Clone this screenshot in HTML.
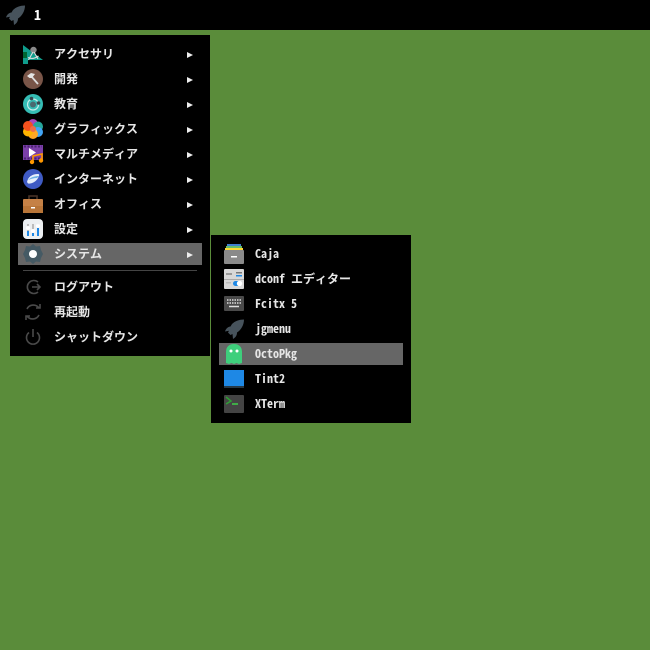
<!DOCTYPE html>
<html><head><meta charset="utf-8"><style>
html,body{margin:0;padding:0;width:650px;height:650px;overflow:hidden;background:#5a8c3a}
*{box-sizing:border-box}
.a{position:absolute}
.t{position:absolute;white-space:pre;color:#e6e6e6;font:bold 12px/20px "Noto Sans Mono CJK JP","DejaVu Sans Mono","Noto Sans CJK JP",monospace;}
.r{position:absolute;left:187px;width:0;height:0;border-left:6px solid #eee;border-top:3px solid transparent;border-bottom:3px solid transparent}
svg{position:absolute;overflow:visible}
</style></head><body>
<div class="a" style="left:0;top:0;width:650px;height:30px;background:#000"></div>
<svg style="left:5px;top:5px" width="20" height="20" viewBox="0 0 20 20"><path d="M20 .5C15.500 .5 11 2 8 5L6.500 7.500C4 7.800 2 9.500 1 12.500L5 11.800 4 13.500 6.500 16 8.500 15 9 20C11.500 18.500 13 16.500 13 13.500 17 11 20 6 20 .5Z" fill="#47535c"/></svg>
<div class="t" style="left:34px;top:5px;font-size:14px;color:#fff">1</div>

<div class="a" style="left:10px;top:35px;width:200px;height:321px;background:#000"></div>
<div class="a" style="left:18px;top:243px;width:184px;height:22px;background:#666"></div>
<div class="a" style="left:23px;top:270px;width:174px;height:1px;background:#444"></div>
<div class="a" style="left:211px;top:235px;width:200px;height:188px;background:#000"></div>
<div class="a" style="left:219px;top:343px;width:184px;height:22px;background:#666"></div>

<!-- main icons -->
<svg style="left:23px;top:44px" width="20" height="20" viewBox="0 0 20 20"><path d="M0 1 20 16H5V20H0Z" fill="#0f9d8c"/><rect x="0" y="8" width="4" height="6" fill="#063"/><circle cx="10.500" cy="6" r="3.200" fill="#8a8a8a"/><path d="M10 8 5.500 16M11 8 15 15M5 13.500Q10 16 15.500 12" stroke="#ddd" stroke-width="1.100" fill="none"/></svg>
<svg style="left:23px;top:69px" width="20" height="20" viewBox="0 0 20 20"><circle cx="10" cy="10" r="10" fill="#795548"/><path d="M8 7 15 15" stroke="#ddd" stroke-width="1.800"/><path d="M4 7 8 4 12 5 9 9 6.500 9Z" fill="#e4e4e4"/></svg>
<svg style="left:23px;top:94px" width="20" height="20" viewBox="0 0 20 20"><circle cx="10" cy="10" r="10" fill="#35bdb5"/><circle cx="10" cy="10.500" r="5.500" fill="none" stroke="#c5ecea" stroke-width="1.200"/><circle cx="10" cy="10.500" r="3" fill="#4a6a70"/><circle cx="8.500" cy="4.500" r="1.800" fill="#37474f"/><circle cx="15.500" cy="9" r="1.800" fill="#37474f"/></svg>
<svg style="left:23px;top:119px" width="20" height="20" viewBox="0 0 20 20"><circle cx="10" cy="5" r="5" fill="#ab47bc"/><circle cx="15" cy="7.500" r="5" fill="#26a69a"/><circle cx="15" cy="13" r="5" fill="#42a5f5"/><circle cx="10" cy="15" r="5" fill="#ffa726"/><circle cx="5" cy="12.500" r="5" fill="#ffb300"/><circle cx="5" cy="7" r="5" fill="#f4511e"/><circle cx="10" cy="10" r="3" fill="#ef6c4a"/></svg>
<svg style="left:23px;top:144px" width="20" height="20" viewBox="0 0 20 20"><rect y="1" width="20" height="15" fill="#7b3fa8"/><path d="M1 2.500H19M1 14.500H19" stroke="#4a2370" stroke-width="2" stroke-dasharray="2 1.500"/><path d="M6 4 13 8.500 6 13Z" fill="#fff"/><path d="M10 18V12L19 10V16.500" fill="none" stroke="#ff9800" stroke-width="1.600"/><circle cx="9" cy="18" r="2.200" fill="#ff9800"/><circle cx="18" cy="16.500" r="2.200" fill="#ff9800"/></svg>
<svg style="left:23px;top:169px" width="20" height="20" viewBox="0 0 20 20"><circle cx="10" cy="10" r="10" fill="#3f5bc4"/><path d="M4 13C5 8 9 5 15 5 17 5 16 7 15 9 13 13 8 15 5 14.500Z" fill="#e8f0fb"/><path d="M5 11C8 8 12 7 16 7L14 9C11 9 8 10 5 11Z" fill="#6fb2e5"/></svg>
<svg style="left:23px;top:194px" width="20" height="20" viewBox="0 0 20 20"><rect y="5" width="20" height="14" rx="1" fill="#c58146"/><rect y="12" width="20" height="7" fill="#b87538"/><path d="M6 5V2H14V5" fill="none" stroke="#4a3428" stroke-width="1.600"/><rect x="8" y="13" width="4" height="1.500" fill="#fff"/></svg>
<svg style="left:23px;top:219px" width="20" height="20" viewBox="0 0 20 20"><rect width="20" height="20" rx="4" fill="#eceff1"/><path d="M5 5V17M10 5V17M15 5V17" stroke="#bbb" stroke-width="2"/><path d="M5 12V17M10 14V17M15 9V17" stroke="#1e88e5" stroke-width="2"/><circle cx="5" cy="9" r="2" fill="#fff"/><circle cx="10" cy="12" r="2" fill="#fff"/><circle cx="15" cy="7" r="2" fill="#fff"/></svg>
<svg style="left:23px;top:244px" width="20" height="20" viewBox="0 0 20 20"><path d="M10 0 13 2.500 17 2 18 6 20 10 18 14 17 18 13 17.500 10 20 7 17.500 3 18 2 14 0 10 2 6 3 2 7 2.500Z" fill="#455a64"/><circle cx="10" cy="10" r="4" fill="#fff"/></svg>
<svg style="left:23px;top:277px" width="20" height="20" viewBox="0 0 20 20" fill="none" stroke="#4a4a4a" stroke-width="1.600"><path d="M15 5A6.500 6.500 0 1 0 15 15"/><path d="M9 10H17M14 7 17 10 14 13"/></svg>
<svg style="left:23px;top:302px" width="20" height="20" viewBox="0 0 20 20" fill="none" stroke="#4a4a4a" stroke-width="1.600"><path d="M4 7A7 7 0 0 1 16 6M16 13A7 7 0 0 1 4 14"/><path d="M13 6H17V2M7 14H3V18"/></svg>
<svg style="left:23px;top:327px" width="20" height="20" viewBox="0 0 20 20" fill="none" stroke="#4a4a4a" stroke-width="1.600"><path d="M6 5.500A6.500 6.500 0 1 0 14 5.500M10 2V10"/></svg>

<div class="t" style="left:54px;top:44px">アクセサリ</div>
<div class="t" style="left:54px;top:69px">開発</div>
<div class="t" style="left:54px;top:94px">教育</div>
<div class="t" style="left:54px;top:119px">グラフィックス</div>
<div class="t" style="left:54px;top:144px">マルチメディア</div>
<div class="t" style="left:54px;top:169px">インターネット</div>
<div class="t" style="left:54px;top:194px">オフィス</div>
<div class="t" style="left:54px;top:219px">設定</div>
<div class="t" style="left:54px;top:244px">システム</div>
<div class="t" style="left:54px;top:277px">ログアウト</div>
<div class="t" style="left:54px;top:302px">再起動</div>
<div class="t" style="left:54px;top:327px">シャットダウン</div>
<div class="r" style="top:52px"></div><div class="r" style="top:77px"></div><div class="r" style="top:102px"></div><div class="r" style="top:127px"></div><div class="r" style="top:152px"></div><div class="r" style="top:177px"></div><div class="r" style="top:202px"></div><div class="r" style="top:227px"></div><div class="r" style="top:252px"></div>

<!-- submenu icons -->
<svg style="left:224px;top:244px" width="20" height="20" viewBox="0 0 20 20"><rect x="3" width="14" height="3" fill="#3f7fd0"/><rect x="2" y="2" width="16" height="2" fill="#66bb6a"/><rect x="1" y="4" width="18" height="2" fill="#fdd835"/><rect y="6" width="20" height="14" rx="1" fill="#8a8a8a"/><rect x="7" y="12" width="6" height="1.500" fill="#fff"/></svg>
<svg style="left:224px;top:269px" width="20" height="20" viewBox="0 0 20 20"><rect width="20" height="20" rx="1" fill="#d8d8d8"/><rect y="10" width="20" height="1" fill="#aaa"/><rect x="2" y="4" width="6" height="2" fill="#999"/><rect x="12" y="3" width="6" height="1.500" fill="#777"/><rect x="12" y="6" width="6" height="1.500" fill="#1e88e5"/><rect x="2" y="13" width="5" height="1.500" fill="#bbb"/><rect x="9" y="12" width="9" height="5" rx="2.500" fill="#1e88e5"/><circle cx="15.500" cy="14.500" r="2.700" fill="#fff"/></svg>
<svg style="left:224px;top:294px" width="20" height="20" viewBox="0 0 20 20"><rect y="2" width="20" height="15" rx="1" fill="#4a4a4a"/><path d="M3 6H17M3 9H17" stroke="#ddd" stroke-width="1.500" stroke-dasharray="1.500 1"/><path d="M5 12.500H15" stroke="#ddd" stroke-width="1.500"/></svg>
<svg style="left:224px;top:319px" width="20" height="20" viewBox="0 0 20 20"><path d="M20 .5C15.500 .5 11 2 8 5L6.500 7.500C4 7.800 2 9.500 1 12.500L5 11.800 4 13.500 6.500 16 8.500 15 9 20C11.500 18.500 13 16.500 13 13.500 17 11 20 6 20 .5Z" fill="#47535c"/></svg>
<svg style="left:224px;top:344px" width="20" height="20" viewBox="0 0 20 20"><path d="M2 8C2 3 5 0 10 0S18 3 18 8V19L15 20 12.500 19 10 20 7.500 19 5 20 2 19Z" fill="#3ecf7c"/><circle cx="7" cy="7" r="1.500" fill="#fff"/><circle cx="13" cy="7" r="1.500" fill="#fff"/></svg>
<svg style="left:224px;top:369px" width="20" height="20" viewBox="0 0 20 20"><rect y="1" width="20" height="16" fill="#1e88e5"/><rect y="17" width="20" height="2" fill="#263845"/></svg>
<svg style="left:224px;top:394px" width="20" height="20" viewBox="0 0 20 20"><rect y="1" width="20" height="18" rx="1" fill="#444"/><path d="M2 3 7 7 2 10" fill="none" stroke="#2e9e35" stroke-width="1.500"/><path d="M8 10H14" stroke="#3ecf4a" stroke-width="1.500"/></svg>

<div class="t" style="left:255px;top:244px">Caja</div>
<div class="t" style="left:255px;top:269px">dconf エディター</div>
<div class="t" style="left:255px;top:294px">Fcitx 5</div>
<div class="t" style="left:255px;top:319px">jgmenu</div>
<div class="t" style="left:255px;top:344px">OctoPkg</div>
<div class="t" style="left:255px;top:369px">Tint2</div>
<div class="t" style="left:255px;top:394px">XTerm</div>
</body></html>
